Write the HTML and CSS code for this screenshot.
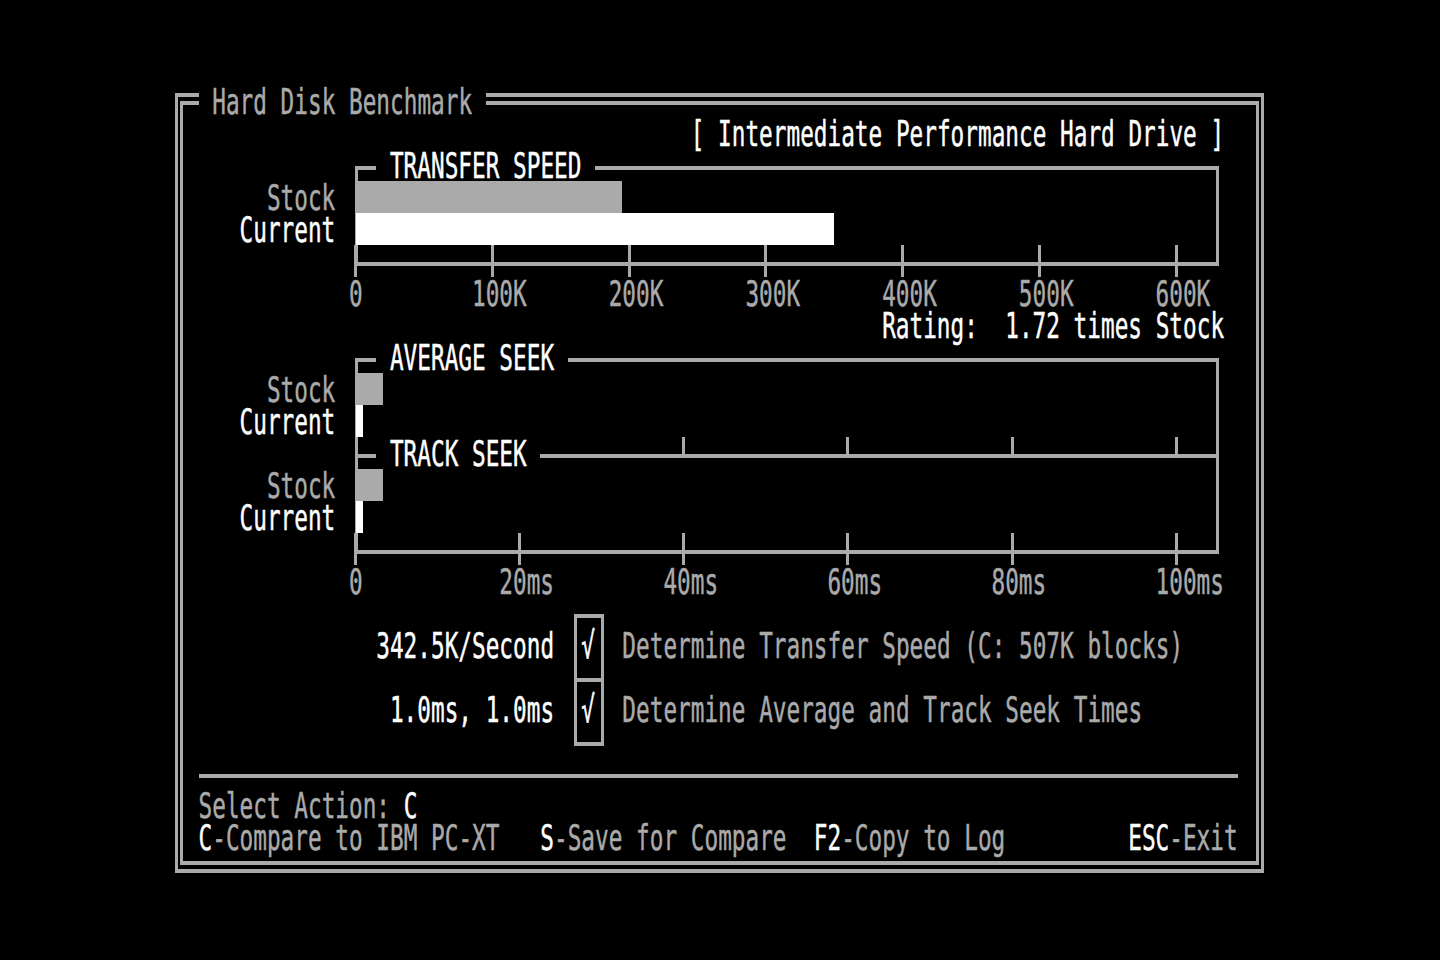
FILE: index.html
```html
<!DOCTYPE html>
<html lang="en">
<head>
<meta charset="utf-8">
<title>Hard Disk Benchmark</title>
<link rel="stylesheet" href="styles.css">
</head>
<body>
<main class="screen">
  <div class="frame"><div class="frame-inner"></div></div>
  <div class="ttl r0 c2"><span class="tx gray"> Hard Disk Benchmark </span></div>
  <div class="tx white r1 c38">[ Intermediate Performance Hard Drive ]</div>

  <!-- Transfer speed chart -->
  <div class="box box-ts"></div>
  <div class="tick r5 c13"></div>
  <div class="tick r5 c23"></div>
  <div class="tick r5 c33"></div>
  <div class="tick r5 c43"></div>
  <div class="tick r5 c53"></div>
  <div class="tick r5 c63"></div>
  <div class="tick r5 c73"></div>
  <div class="ttl r2 c15"><span class="tx white"> TRANSFER SPEED </span></div>
  <div class="tx gray r3 c7">Stock</div>
  <div class="tx white r4 c5">Current</div>
  <div class="bar stock bar-ts-stock"></div>
  <div class="bar current bar-ts-current"></div>
  <div class="tx gray r6 c13">0</div>
  <div class="tx gray r6 c22">100K</div>
  <div class="tx gray r6 c32">200K</div>
  <div class="tx gray r6 c42">300K</div>
  <div class="tx gray r6 c52">400K</div>
  <div class="tx gray r6 c62">500K</div>
  <div class="tx gray r6 c72">600K</div>
  <div class="tx white r7 c52">Rating:  1.72 times Stock</div>

  <!-- Seek chart -->
  <div class="box box-sk"></div>
  <div class="hline mid-line"></div>
  <div class="tick up r11 c37"></div>
  <div class="tick up r11 c49"></div>
  <div class="tick up r11 c61"></div>
  <div class="tick up r11 c73"></div>
  <div class="tick r14 c13"></div>
  <div class="tick r14 c25"></div>
  <div class="tick r14 c37"></div>
  <div class="tick r14 c49"></div>
  <div class="tick r14 c61"></div>
  <div class="tick r14 c73"></div>
  <div class="ttl r8 c15"><span class="tx white"> AVERAGE SEEK </span></div>
  <div class="ttl r11 c15"><span class="tx white"> TRACK SEEK </span></div>
  <div class="tx gray r9 c7">Stock</div>
  <div class="tx white r10 c5">Current</div>
  <div class="tx gray r12 c7">Stock</div>
  <div class="tx white r13 c5">Current</div>
  <div class="bar stock bar-sk r9"></div>
  <div class="bar current bar-sk-cur r10"></div>
  <div class="bar stock bar-sk r12"></div>
  <div class="bar current bar-sk-cur r13"></div>
  <div class="tx gray r15 c13">0</div>
  <div class="tx gray r15 c24">20ms</div>
  <div class="tx gray r15 c36">40ms</div>
  <div class="tx gray r15 c48">60ms</div>
  <div class="tx gray r15 c60">80ms</div>
  <div class="tx gray r15 c72">100ms</div>

  <!-- Test list -->
  <div class="chk"></div>
  <div class="hline chk-mid"></div>
  <div class="tx white r17 c15">342.5K/Second</div>
  <div class="tx white r17 c30">√</div>
  <div class="tx gray r17 c33">Determine Transfer Speed (C: 507K blocks)</div>
  <div class="tx white r19 c16">1.0ms, 1.0ms</div>
  <div class="tx white r19 c30">√</div>
  <div class="tx gray r19 c33">Determine Average and Track Seek Times</div>

  <!-- Footer -->
  <div class="hline sep"></div>
  <div class="tx gray r22 c2">Select Action: <span class="white">C</span></div>
  <div class="tx gray r23 c2"><span class="white">C</span>-Compare to IBM PC-XT</div>
  <div class="tx gray r23 c27"><span class="white">S</span>-Save for Compare</div>
  <div class="tx gray r23 c47"><span class="white">F2</span>-Copy to Log</div>
  <div class="tx gray r23 c70"><span class="white">ESC</span>-Exit</div>
</main>
</body>
</html>
```
FILE: styles.css
```css
* { box-sizing: border-box; }

html, body {
  margin: 0;
  padding: 0;
  background: #000;
  height: 100%;
  overflow: hidden;
}

.screen {
  margin: 85px 0 0 171.2px;
  display: grid;
  grid-template-columns: repeat(80, 13.68px);
  grid-template-rows: repeat(25, 32px);
  font-family: "DejaVu Sans Mono", monospace;
  font-size: 22.72px;
  line-height: 32px;
  color: #aaaaaa;
}

/* text: glyphs are stretched vertically like the 8x8 CGA font */
.tx {
  justify-self: start;
  align-self: center;
  white-space: pre;
  line-height: 20px;
  -webkit-text-stroke: 0.3px currentColor;
  transform: scaleY(1.6);
}
.ttl {
  justify-self: start;
  white-space: pre;
  background: #000;
}
.ttl .tx { display: inline-block; }
.gray { color: #aaaaaa; }
.white { color: #ffffff; }

/* rows */
.r0 { grid-row: 1; }
.r1 { grid-row: 2; }
.r2 { grid-row: 3; }
.r3 { grid-row: 4; }
.r4 { grid-row: 5; }
.r5 { grid-row: 6; }
.r6 { grid-row: 7; }
.r7 { grid-row: 8; }
.r8 { grid-row: 9; }
.r9 { grid-row: 10; }
.r10 { grid-row: 11; }
.r11 { grid-row: 12; }
.r12 { grid-row: 13; }
.r13 { grid-row: 14; }
.r14 { grid-row: 15; }
.r15 { grid-row: 16; }
.r17 { grid-row: 18; }
.r19 { grid-row: 20; }
.r22 { grid-row: 23; }
.r23 { grid-row: 24; }

/* columns */
.c2 { grid-column-start: 3; }
.c5 { grid-column-start: 6; }
.c7 { grid-column-start: 8; }
.c13 { grid-column-start: 14; }
.c15 { grid-column-start: 16; }
.c16 { grid-column-start: 17; }
.c22 { grid-column-start: 23; }
.c23 { grid-column-start: 24; }
.c24 { grid-column-start: 25; }
.c25 { grid-column-start: 26; }
.c27 { grid-column-start: 28; }
.c30 { grid-column-start: 31; }
.c32 { grid-column-start: 33; }
.c33 { grid-column-start: 34; }
.c36 { grid-column-start: 37; }
.c37 { grid-column-start: 38; }
.c38 { grid-column-start: 39; }
.c42 { grid-column-start: 43; }
.c43 { grid-column-start: 44; }
.c47 { grid-column-start: 48; }
.c48 { grid-column-start: 49; }
.c49 { grid-column-start: 50; }
.c52 { grid-column-start: 53; }
.c53 { grid-column-start: 54; }
.c60 { grid-column-start: 61; }
.c61 { grid-column-start: 62; }
.c62 { grid-column-start: 63; }
.c63 { grid-column-start: 64; }
.c70 { grid-column-start: 71; }
.c72 { grid-column-start: 73; }
.c73 { grid-column-start: 74; }

/* outer double frame */
.frame {
  grid-area: 1 / 1 / 26 / 81;
  margin: 8px 0.6px 12px 3.8px;
  border: solid #aaaaaa;
  border-width: 4px 3px;
  padding: 4px 2px;
  display: flex;
}
.frame-inner {
  flex: 1;
  border: solid #aaaaaa;
  border-width: 4px 3px;
}

/* chart boxes */
.box {
  border: solid #aaaaaa;
  border-width: 4px 3px;
  margin: 17px 4.5px 11px 6px;
}
.box-ts { grid-area: 3 / 14 / 7 / 78; }
.box-sk { grid-area: 9 / 14 / 16 / 78; }

.hline {
  align-self: start;
  height: 4px;
  background: #aaaaaa;
}
.mid-line {
  grid-area: 12 / 14 / 13 / 78;
  margin: 17px 4.5px 0 6px;
}
.sep {
  grid-area: 22 / 3 / 23 / 79;
  margin-top: 17px;
}

.tick {
  justify-self: center;
  width: 3px;
  background: #aaaaaa;
}
.tick.up {
  align-self: start;
  height: 21px;
}

/* bars */
.bar.stock { background: #aaaaaa; }
.bar.current { background: #ffffff; }
.bar-ts-stock { grid-area: 4 / 14 / 5 / 34; margin-left: 7px; }
.bar-ts-current { grid-area: 5 / 14 / 6 / 50; margin-left: 7px; margin-right: 6.8px; }
.bar-sk { grid-column: 14 / 17; margin-left: 7px; margin-right: 6.8px; }
.bar-sk-cur { grid-column: 14 / 15; margin-left: 7px; }

/* check boxes */
.chk {
  grid-area: 17 / 30 / 22 / 33;
  border: solid #aaaaaa;
  border-width: 4px 3px;
  margin: 17px 5px 11px 6px;
}
.chk-mid {
  grid-area: 19 / 30 / 20 / 33;
  margin: 17px 5px 0 6px;
}
```
